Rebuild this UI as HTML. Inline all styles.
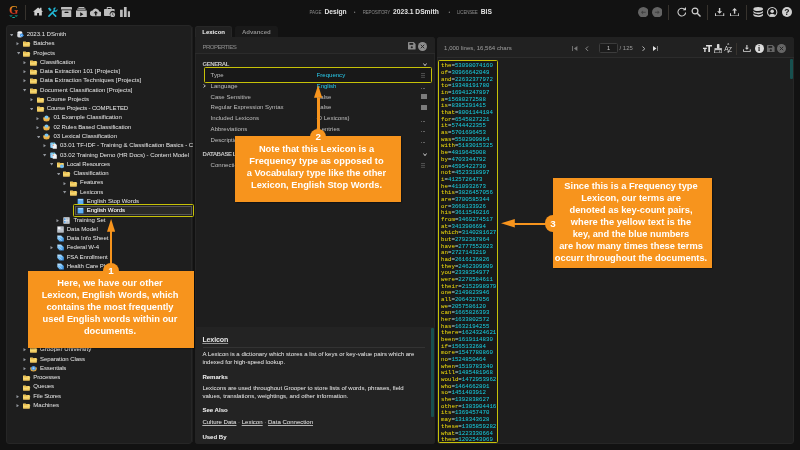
<!DOCTYPE html>
<html><head><meta charset="utf-8"><title>Grooper</title>
<style>
*{margin:0;padding:0;box-sizing:border-box}
html,body{width:800px;height:450px;overflow:hidden;background:#121212}
body{position:relative;font-family:"Liberation Sans", sans-serif;font-size:6.05px;color:#c4c4c4;line-height:9px}
.abs,.tt,.ti,.ar,.pl,.pv,.pi,.pdots,.psq,.t{position:absolute;white-space:nowrap}
.panel{position:absolute;background:#1e1e1e;border-radius:3px;border:1px solid #262626}
.ic{display:block;width:7px;height:7px}
.ti{width:7px;height:7px}
.ar{width:3.3px;height:2.7px;fill:#92969c}
.arr{width:3.5px;height:3.3px;fill:#92969c}
.tt{color:#d0d0d0;text-shadow:0 0 .6px rgba(208,208,208,.42)}
.tt.sel{color:#fff}
.pl{color:#b2b2b2;text-shadow:0 0 .6px rgba(178,178,178,.22)}
.pv{color:#b2b2b2;text-shadow:0 0 .6px rgba(178,178,178,.22)}
.pv.cy{color:#27b0cc;text-shadow:0 0 .6px rgba(39,176,204,.5)}
.pdots{width:3.6px;height:1px;background:linear-gradient(90deg,#626262 0 1.2px,transparent 1.2px 2.4px,#626262 2.4px 3.6px,transparent 3.6px)}
.psq{width:5.4px;height:5.4px;background:#7c7c7c;border-radius:.3px}
.hb{position:absolute;border:1.5px solid #c6c108;border-radius:1.4px}
.co{position:absolute;background:#f7941d;color:#fff;font-weight:bold;font-size:9.3px;line-height:12px;text-align:center;white-space:nowrap;box-shadow:1.4px 1.4px 1.6px rgba(0,0,0,.75)}
.circ{position:absolute;width:16.4px;height:16.4px;border-radius:50%;background:#f7941d;color:#fff;font-weight:bold;font-size:9.8px;line-height:16.2px;text-align:center}
.lex{position:absolute;left:441.1px;top:62px;font-family:"Liberation Mono",monospace;font-size:5.75px;line-height:7px;color:#18b8c8;white-space:nowrap}
.lex div{position:absolute;left:0}
.lex{text-shadow:0 0 .6px rgba(24,184,200,.45)}
.lex b{font-weight:normal;color:#d9c80e;text-shadow:0 0 .6px rgba(217,200,14,.45)}
.lex i{font-style:normal;color:#b8b8b8}
.sm{font-size:4.5px;color:#8a8a8a}
.bd{font-weight:bold;color:#e4e4e4;font-size:6.7px}
.hd{font-weight:bold;color:#e2e2e2;text-shadow:0 0 .5px rgba(220,220,220,.4)}
.hp{color:#d0d0d0;text-shadow:0 0 .6px rgba(208,208,208,.5)}
u{text-decoration-thickness:.45px;text-underline-offset:.9px;text-decoration-color:rgba(220,220,220,.6)}
#wrap{position:absolute;left:0;top:0;width:800px;height:450px;will-change:transform}
</style></head><body><div id="wrap">

<!-- ===== top bar ===== -->
<div class="abs" id="logo" style="left:8.5px;top:2.5px;font-family:'Liberation Serif',serif;font-size:13.4px;line-height:14px;font-weight:bold;transform:scaleX(.9);transform-origin:0 0;background:linear-gradient(180deg,#f0a01c 22%,#e0521f 55%,#c4201e 82%);-webkit-background-clip:text;background-clip:text;color:transparent">G</div>
<svg class="abs" style="left:8.8px;top:14.6px;width:9.2px;height:3.6px" viewBox="0 0 92 36"><path d="M2 4h36l-14 12h-10zM54 4h36l-12 12h-10zM30 20h32l-10 14h-12z" fill="#12b3a2"/></svg>
<div class="abs" style="left:24.8px;top:5px;width:.8px;height:14.6px;background:#37332e"></div>

<!-- left icons -->
<svg class="abs" style="left:32.8px;top:7.2px;width:10.2px;height:9px" viewBox="0 0 21 18"><path d="M10.5 .5L0 9.600h2.800V17.500h5.700v-5.500h4v5.500h5.700V9.600H21L17.500 6.500V1.500h-3v2.400z" fill="#cfcfcf"/></svg>
<svg class="abs" style="left:47.2px;top:6.8px;width:10.6px;height:10.6px" viewBox="0 0 22 22"><g fill="none" stroke="#22b8d6" stroke-width="3.2" stroke-linecap="round"><path d="M4 19L14.500 8.500"/><path d="M18 19l-6.500-6.500"/></g><path d="M13 3.500a4.600 4.600 0 0 1 6-1.800l-3 3 .6 2 2 .6 3-3a4.600 4.600 0 0 1-6.800 5.200z" fill="#22b8d6"/><path d="M2 3l3-2 4.500 4.500-1 2.500-2.500 1z" fill="#22b8d6"/></svg>
<svg class="abs" style="left:61.2px;top:6.8px;width:11px;height:10.3px" viewBox="0 0 22 20" preserveAspectRatio="none"><rect x="0" y="0" width="22" height="5" rx="1" fill="#bdbdbd"/><path d="M1.500 6.500h19V19a1 1 0 0 1-1 1h-17a1 1 0 0 1-1-1z" fill="#bdbdbd"/><rect x="7" y="9" width="8" height="2.600" rx="1" fill="#121212"/></svg>
<svg class="abs" style="left:75.8px;top:6.6px;width:10.8px;height:10.8px" viewBox="0 0 22 20" preserveAspectRatio="none"><path d="M5 0h12v2h-12zM2.500 3h17v2h-17z" fill="#bdbdbd"/><path d="M0 6.500h22V19a1 1 0 0 1-1 1h-20a1 1 0 0 1-1-1z" fill="#bdbdbd"/><path d="M8.500 9.500v7.500l6.500-3.750z" fill="#121212"/></svg>
<svg class="abs" style="left:89.9px;top:7.8px;width:11.6px;height:9px" viewBox="0 0 24 18"><path d="M19.400 7a7.500 7.500 0 0 0-14-2A6 6 0 0 0 6 17h13a5 5 0 0 0 .4-10z" fill="#bdbdbd"/><path d="M12 6l-4.500 4.500h3V15h3v-4.500h3z" fill="#121212"/></svg>
<svg class="abs" style="left:104.4px;top:6.8px;width:11.4px;height:10.4px" viewBox="0 0 23 21"><path d="M7 0h7a1.500 1.500 0 0 1 1.500 1.500V4H20a1.500 1.500 0 0 1 1.500 1.500V9a6.500 6.500 0 0 0-9 9H1.500A1.500 1.500 0 0 1 0 16.500v-11A1.500 1.500 0 0 1 1.500 4H5.500V1.500A1.500 1.500 0 0 1 7 0zM7.500 2v2h6V2z" fill="#bdbdbd" fill-rule="evenodd"/><circle cx="17.500" cy="15.500" r="5" fill="#bdbdbd"/><path d="M17.500 12.500v3.200l2 1.200" stroke="#121212" stroke-width="1.300" fill="none"/></svg>
<svg class="abs" style="left:119.6px;top:7px;width:10.6px;height:10px" viewBox="0 0 21 20"><rect x="0" y="5.500" width="5.400" height="14.500" fill="#bdbdbd"/><rect x="7.800" y="0" width="5.400" height="20" fill="#bdbdbd"/><rect x="15.600" y="8.500" width="5.400" height="11.500" fill="#bdbdbd"/></svg>

<!-- center labels -->
<span class="t sm" style="left:309.4px;top:7.8px">PAGE</span>
<span class="t bd" style="left:324.4px;top:7.3px">Design</span>
<span class="t" style="left:353.7px;top:7.9px;color:#777;font-size:5px">•</span>
<span class="t sm" style="left:362.8px;top:7.8px;letter-spacing:-.22px">REPOSITORY</span>
<span class="t bd" style="left:393px;top:7.3px">2023.1 DSmith</span>
<span class="t" style="left:448.6px;top:7.9px;color:#777;font-size:5px">•</span>
<span class="t sm" style="left:457px;top:7.8px;letter-spacing:-.2px">LICENSEE</span>
<span class="t bd" style="left:480.7px;top:7.3px">BIS</span>

<!-- right icons -->
<svg class="abs" style="left:637.6px;top:6.7px;width:10.6px;height:10.6px" viewBox="0 0 20 20"><circle cx="10" cy="10" r="10" fill="#646464"/><path d="M14.500 9.200H9.500V6.500l-4 3.500 4 3.500v-2.700h5z" fill="#404040"/></svg>
<svg class="abs" style="left:651.8px;top:6.7px;width:10.6px;height:10.6px" viewBox="0 0 20 20"><circle cx="10" cy="10" r="10" fill="#646464"/><path d="M5.500 9.200h5V6.500l4 3.500-4 3.500v-2.700h-5z" fill="#404040"/></svg>
<div class="abs" style="left:668.4px;top:5px;width:.8px;height:14.6px;background:#37332e"></div>
<svg class="abs" style="left:676.6px;top:7.2px;width:9.6px;height:9.6px" viewBox="0 0 20 20"><path d="M16.500 6A8 8 0 1 0 18 11.500" fill="none" stroke="#d0d0d0" stroke-width="2.200"/><path d="M12 7h7V0z" fill="#d0d0d0"/></svg>
<svg class="abs" style="left:690.8px;top:7px;width:10px;height:10px" viewBox="0 0 20 20"><circle cx="8" cy="8" r="5.800" fill="none" stroke="#d0d0d0" stroke-width="2.400"/><path d="M12.500 12.500L19 19" stroke="#d0d0d0" stroke-width="2.800"/></svg>
<div class="abs" style="left:707.1px;top:5px;width:.8px;height:14.6px;background:#37332e"></div>
<svg class="abs" style="left:715.4px;top:7.6px;width:9.2px;height:8.8px" viewBox="0 0 20 19"><path d="M8.500 0h3v7h4L10 12.500 4.500 7h4z" fill="#d0d0d0"/><path d="M1 11.500v6h18v-6" fill="none" stroke="#d0d0d0" stroke-width="2.200"/></svg>
<svg class="abs" style="left:729.9px;top:7.6px;width:9.2px;height:8.8px" viewBox="0 0 20 19"><path d="M8.500 12.500h3v-7h4L10 0 4.500 5.500h4z" fill="#d0d0d0"/><path d="M1 11.500v6h18v-6" fill="none" stroke="#d0d0d0" stroke-width="2.200"/></svg>
<div class="abs" style="left:745.8px;top:5px;width:.8px;height:14.6px;background:#37332e"></div>
<svg class="abs" style="left:752.8px;top:7px;width:10.4px;height:10.2px" viewBox="0 0 20 20"><ellipse cx="10" cy="4" rx="9.500" ry="4" fill="#d0d0d0"/><path d="M.5 7c0 2.200 4.300 4 9.500 4s9.500-1.800 9.500-4v3c0 2.200-4.300 4-9.500 4S.5 12.200.5 10zM.5 12.500c0 2.200 4.300 4 9.500 4s9.500-1.800 9.500-4v3c0 2.200-4.300 4-9.500 4S.5 17.700.5 15.500z" fill="#d0d0d0"/></svg>
<svg class="abs" style="left:767.3px;top:6.8px;width:10.4px;height:10.4px" viewBox="0 0 20 20"><circle cx="10" cy="10" r="9" fill="none" stroke="#d0d0d0" stroke-width="2"/><circle cx="10" cy="8" r="3.400" fill="#d0d0d0"/><path d="M3.800 16a7 5.500 0 0 1 12.400 0A9 9 0 0 1 3.800 16z" fill="#d0d0d0"/></svg>
<div class="abs" style="left:781.8px;top:6.8px;width:10.4px;height:10.4px;border-radius:50%;background:#d0d0d0;color:#121212;font-weight:bold;font-size:8.6px;line-height:10.6px;text-align:center">?</div>

<!-- ===== left panel ===== -->
<div class="panel" style="left:6px;top:25px;width:186px;height:419px"></div>
<div class="abs" style="left:192px;top:27px;width:1px;height:415px;background:#1d1d1d"></div>
<div class="abs" style="left:74.8px;top:205.9px;width:117px;height:9.2px;background:#292929;border:.5px solid #565656"></div>
<svg class="ar" style="left:9.90px;top:33.50px" viewBox="0 0 4 3"><path d="M0 0h4l-2 3z"/></svg>
<span class="ti" style="left:16.70px;top:31.10px"><svg class="ic" viewBox="0 0 14 14"><path d="M.8 2.800v8c0 1.300 2.200 2.300 4.900 2.300s4.900-1 4.900-2.300v-8z" fill="#c9ced6"/><ellipse cx="5.700" cy="2.800" rx="4.900" ry="2.100" fill="#f2f4f6"/><path d="M.8 5.800c0 1.200 2.200 2.100 4.900 2.100s4.900-.9 4.900-2.100M.8 8.600c0 1.200 2.200 2.100 4.900 2.100s4.900-.9 4.900-2.100" stroke="#eef0f3" stroke-width="1" fill="none"/><circle cx="9.400" cy="8.600" r="3.400" fill="#3d97ee"/><path d="M11 7.400l3 1.200-3 1.400z" fill="#3d97ee"/><circle cx="9.400" cy="8.600" r="1.200" fill="#bfe0ff"/></svg></span>
<span class="tt" style="left:26.70px;top:30px;letter-spacing:-0.036px">2023.1 DSmith</span>
<svg class="ar arr" style="left:16.47px;top:42.38px" viewBox="0 0 3 4"><path d="M0 0v4l3-2z"/></svg>
<span class="ti" style="left:23.37px;top:40.38px"><svg class="ic" viewBox="0 0 14 14" style="overflow:visible"><path d="M0 3.600a.8.800 0 0 1 .8-.8h4.400l1.300 1.300h6.300a.8.800 0 0 1 .8.800v1.500l1.200 1.300-1.200 1.300v3.200a.8.800 0 0 1-.8.800H.8a.8.800 0 0 1-.8-.8z" fill="#f6d870"/><rect x="1.400" y="5" width="7.800" height="1.500" fill="#dc9c2c"/><path d="M0 11.200h13.600v1a.8.800 0 0 1-.8.800H.8a.8.800 0 0 1-.8-.8z" fill="#ecbe54"/></svg></span>
<span class="tt" style="left:33.37px;top:39px;letter-spacing:-0.104px">Batches</span>
<svg class="ar" style="left:16.57px;top:52.05px" viewBox="0 0 4 3"><path d="M0 0h4l-2 3z"/></svg>
<span class="ti" style="left:23.37px;top:49.65px"><svg class="ic" viewBox="0 0 14 14" style="overflow:visible"><path d="M0 3.600a.8.800 0 0 1 .8-.8h4.400l1.300 1.300h6.300a.8.800 0 0 1 .8.800v1.500l1.200 1.300-1.200 1.300v3.200a.8.800 0 0 1-.8.800H.8a.8.800 0 0 1-.8-.8z" fill="#f6d870"/><rect x="1.400" y="5" width="7.800" height="1.500" fill="#dc9c2c"/><path d="M0 11.200h13.600v1a.8.800 0 0 1-.8.800H.8a.8.800 0 0 1-.8-.8z" fill="#ecbe54"/></svg></span>
<span class="tt" style="left:33.37px;top:49px;letter-spacing:-0.028px">Projects</span>
<svg class="ar arr" style="left:23.14px;top:60.93px" viewBox="0 0 3 4"><path d="M0 0v4l3-2z"/></svg>
<span class="ti" style="left:30.04px;top:58.93px"><svg class="ic" viewBox="0 0 14 14" style="overflow:visible"><path d="M0 3.600a.8.800 0 0 1 .8-.8h4.400l1.300 1.300h6.300a.8.800 0 0 1 .8.800v1.500l1.200 1.300-1.200 1.300v3.200a.8.800 0 0 1-.8.800H.8a.8.800 0 0 1-.8-.8z" fill="#f6d870"/><rect x="1.400" y="5" width="7.800" height="1.500" fill="#dc9c2c"/><path d="M0 11.200h13.600v1a.8.800 0 0 1-.8.800H.8a.8.800 0 0 1-.8-.8z" fill="#ecbe54"/></svg></span>
<span class="tt" style="left:40.04px;top:58px;letter-spacing:-0.032px">Classification</span>
<svg class="ar arr" style="left:23.14px;top:70.20px" viewBox="0 0 3 4"><path d="M0 0v4l3-2z"/></svg>
<span class="ti" style="left:30.04px;top:68.20px"><svg class="ic" viewBox="0 0 14 14" style="overflow:visible"><path d="M0 3.600a.8.800 0 0 1 .8-.8h4.400l1.300 1.300h6.300a.8.800 0 0 1 .8.800v1.500l1.200 1.300-1.200 1.300v3.200a.8.800 0 0 1-.8.800H.8a.8.800 0 0 1-.8-.8z" fill="#f6d870"/><rect x="1.400" y="5" width="7.800" height="1.500" fill="#dc9c2c"/><path d="M0 11.200h13.600v1a.8.800 0 0 1-.8.800H.8a.8.800 0 0 1-.8-.8z" fill="#ecbe54"/></svg></span>
<span class="tt" style="left:40.04px;top:67px;letter-spacing:-0.002px">Data Extraction 101 [Projects]</span>
<svg class="ar arr" style="left:23.14px;top:79.47px" viewBox="0 0 3 4"><path d="M0 0v4l3-2z"/></svg>
<span class="ti" style="left:30.04px;top:77.47px"><svg class="ic" viewBox="0 0 14 14" style="overflow:visible"><path d="M0 3.600a.8.800 0 0 1 .8-.8h4.400l1.300 1.300h6.300a.8.800 0 0 1 .8.800v1.500l1.200 1.300-1.200 1.300v3.200a.8.800 0 0 1-.8.800H.8a.8.800 0 0 1-.8-.8z" fill="#f6d870"/><rect x="1.400" y="5" width="7.800" height="1.500" fill="#dc9c2c"/><path d="M0 11.200h13.600v1a.8.800 0 0 1-.8.800H.8a.8.800 0 0 1-.8-.8z" fill="#ecbe54"/></svg></span>
<span class="tt" style="left:40.04px;top:76px;letter-spacing:0.021px">Data Extraction Techniques [Projects]</span>
<svg class="ar" style="left:23.24px;top:89.15px" viewBox="0 0 4 3"><path d="M0 0h4l-2 3z"/></svg>
<span class="ti" style="left:30.04px;top:86.75px"><svg class="ic" viewBox="0 0 14 14" style="overflow:visible"><path d="M0 3.600a.8.800 0 0 1 .8-.8h4.400l1.300 1.300h6.300a.8.800 0 0 1 .8.800v1.500l1.200 1.300-1.200 1.300v3.200a.8.800 0 0 1-.8.800H.8a.8.800 0 0 1-.8-.8z" fill="#f6d870"/><rect x="1.400" y="5" width="7.800" height="1.500" fill="#dc9c2c"/><path d="M0 11.200h13.600v1a.8.800 0 0 1-.8.800H.8a.8.800 0 0 1-.8-.8z" fill="#ecbe54"/></svg></span>
<span class="tt" style="left:40.04px;top:86px;letter-spacing:0.020px">Document Classification [Projects]</span>
<svg class="ar arr" style="left:29.81px;top:98.02px" viewBox="0 0 3 4"><path d="M0 0v4l3-2z"/></svg>
<span class="ti" style="left:36.71px;top:96.02px"><svg class="ic" viewBox="0 0 14 14" style="overflow:visible"><path d="M0 3.600a.8.800 0 0 1 .8-.8h4.400l1.300 1.300h6.300a.8.800 0 0 1 .8.800v1.500l1.200 1.300-1.200 1.300v3.200a.8.800 0 0 1-.8.800H.8a.8.800 0 0 1-.8-.8z" fill="#f6d870"/><rect x="1.400" y="5" width="7.800" height="1.500" fill="#dc9c2c"/><path d="M0 11.200h13.600v1a.8.800 0 0 1-.8.800H.8a.8.800 0 0 1-.8-.8z" fill="#ecbe54"/></svg></span>
<span class="tt" style="left:46.71px;top:95px;letter-spacing:-0.050px">Course Projects</span>
<svg class="ar" style="left:29.91px;top:107.70px" viewBox="0 0 4 3"><path d="M0 0h4l-2 3z"/></svg>
<span class="ti" style="left:36.71px;top:105.30px"><svg class="ic" viewBox="0 0 14 14" style="overflow:visible"><path d="M0 3.600a.8.800 0 0 1 .8-.8h4.400l1.300 1.300h6.300a.8.800 0 0 1 .8.800v1.500l1.200 1.300-1.200 1.300v3.200a.8.800 0 0 1-.8.800H.8a.8.800 0 0 1-.8-.8z" fill="#f6d870"/><rect x="1.400" y="5" width="7.800" height="1.500" fill="#dc9c2c"/><path d="M0 11.200h13.600v1a.8.800 0 0 1-.8.800H.8a.8.800 0 0 1-.8-.8z" fill="#ecbe54"/></svg></span>
<span class="tt" style="left:46.71px;top:104px;letter-spacing:-0.177px">Course Projects - COMPLETED</span>
<svg class="ar arr" style="left:36.48px;top:116.58px" viewBox="0 0 3 4"><path d="M0 0v4l3-2z"/></svg>
<span class="ti" style="left:43.38px;top:114.58px"><svg class="ic" viewBox="0 0 14 14"><path d="M.6 4.600h12.800v3.600a6.400 5 0 0 1-12.800 0z" fill="#e5a535"/><path d="M1 7.200h12M1.800 9.700h10.400" stroke="#f7d688" stroke-width="1" fill="none"/><ellipse cx="7" cy="4.200" rx="4" ry="3.300" fill="#7cc7f3"/></svg></span>
<span class="tt" style="left:53.38px;top:113px;letter-spacing:-0.036px">01 Example Classification</span>
<svg class="ar arr" style="left:36.48px;top:125.85px" viewBox="0 0 3 4"><path d="M0 0v4l3-2z"/></svg>
<span class="ti" style="left:43.38px;top:123.85px"><svg class="ic" viewBox="0 0 14 14"><path d="M.6 4.600h12.800v3.600a6.400 5 0 0 1-12.800 0z" fill="#e5a535"/><path d="M1 7.200h12M1.800 9.700h10.400" stroke="#f7d688" stroke-width="1" fill="none"/><ellipse cx="7" cy="4.200" rx="4" ry="3.300" fill="#7cc7f3"/></svg></span>
<span class="tt" style="left:53.38px;top:123px;letter-spacing:-0.083px">02 Rules Based Classification</span>
<svg class="ar" style="left:36.58px;top:135.53px" viewBox="0 0 4 3"><path d="M0 0h4l-2 3z"/></svg>
<span class="ti" style="left:43.38px;top:133.12px"><svg class="ic" viewBox="0 0 14 14"><path d="M.6 4.600h12.800v3.600a6.400 5 0 0 1-12.800 0z" fill="#e5a535"/><path d="M1 7.200h12M1.800 9.700h10.400" stroke="#f7d688" stroke-width="1" fill="none"/><ellipse cx="7" cy="4.200" rx="4" ry="3.300" fill="#7cc7f3"/></svg></span>
<span class="tt" style="left:53.38px;top:132px;letter-spacing:-0.038px">03 Lexical Classification</span>
<svg class="ar arr" style="left:43.15px;top:144.40px" viewBox="0 0 3 4"><path d="M0 0v4l3-2z"/></svg>
<span class="ti" style="left:50.05px;top:142.40px"><svg class="ic" viewBox="0 0 14 14"><rect x=".6" y=".8" width="10" height="11" rx="1.800" fill="#7fc4f0"/><path d="M5.400 4.200h6l2.200 2v7.200H5.400z" fill="#f3f3f3"/><circle cx="7" cy="3.400" r="1" fill="#4db05a"/><circle cx="6.400" cy="6.400" r="1" fill="#e0523e"/><path d="M2 5.500l2.500 5" stroke="#d9f0ff" stroke-width="1"/></svg></span>
<span class="tt" style="left:60.05px;top:141px;letter-spacing:-0.037px">03.01 TF-IDF - Training &amp; Classification Basics - Content Model</span>
<svg class="ar" style="left:43.25px;top:154.07px" viewBox="0 0 4 3"><path d="M0 0h4l-2 3z"/></svg>
<span class="ti" style="left:50.05px;top:151.67px"><svg class="ic" viewBox="0 0 14 14"><rect x=".6" y=".8" width="10" height="11" rx="1.800" fill="#7fc4f0"/><path d="M5.400 4.200h6l2.200 2v7.200H5.400z" fill="#f3f3f3"/><circle cx="7" cy="3.400" r="1" fill="#4db05a"/><circle cx="6.400" cy="6.400" r="1" fill="#e0523e"/><path d="M2 5.500l2.500 5" stroke="#d9f0ff" stroke-width="1"/></svg></span>
<span class="tt" style="left:60.05px;top:151px;letter-spacing:-0.041px">03.02 Training Demo (HR Docs) - Content Model</span>
<svg class="ar" style="left:49.92px;top:163.35px" viewBox="0 0 4 3"><path d="M0 0h4l-2 3z"/></svg>
<span class="ti" style="left:56.72px;top:160.95px"><svg class="ic" viewBox="0 0 14 14" style="overflow:visible"><path d="M0 3.600a.8.800 0 0 1 .8-.8h4.400l1.300 1.300h6.300a.8.800 0 0 1 .8.800v7.300a.8.800 0 0 1-.8.800H.8a.8.800 0 0 1-.8-.8z" fill="#f6d870"/><rect x="1.400" y="5" width="7.800" height="1.500" fill="#dc9c2c"/><circle cx="9.800" cy="10.600" r="3.700" fill="#5fb2f0"/><path d="M6.200 10.600h7.200" stroke="#a9d8fa" stroke-width=".9"/></svg></span>
<span class="tt" style="left:66.72px;top:160px;letter-spacing:-0.119px">Local Resources</span>
<svg class="ar" style="left:56.59px;top:172.62px" viewBox="0 0 4 3"><path d="M0 0h4l-2 3z"/></svg>
<span class="ti" style="left:63.39px;top:170.22px"><svg class="ic" viewBox="0 0 14 14" style="overflow:visible"><path d="M0 3.600a.8.800 0 0 1 .8-.8h4.400l1.300 1.300h6.300a.8.800 0 0 1 .8.800v1.500l1.200 1.300-1.200 1.300v3.200a.8.800 0 0 1-.8.800H.8a.8.800 0 0 1-.8-.8z" fill="#f6d870"/><rect x="1.400" y="5" width="7.800" height="1.500" fill="#dc9c2c"/><path d="M0 11.200h13.600v1a.8.800 0 0 1-.8.800H.8a.8.800 0 0 1-.8-.8z" fill="#ecbe54"/></svg></span>
<span class="tt" style="left:73.39px;top:169px;letter-spacing:-0.032px">Classification</span>
<svg class="ar arr" style="left:63.16px;top:181.50px" viewBox="0 0 3 4"><path d="M0 0v4l3-2z"/></svg>
<span class="ti" style="left:70.06px;top:179.50px"><svg class="ic" viewBox="0 0 14 14" style="overflow:visible"><path d="M0 3.600a.8.800 0 0 1 .8-.8h4.400l1.300 1.300h6.300a.8.800 0 0 1 .8.800v1.500l1.200 1.300-1.200 1.300v3.200a.8.800 0 0 1-.8.800H.8a.8.800 0 0 1-.8-.8z" fill="#f6d870"/><rect x="1.400" y="5" width="7.800" height="1.500" fill="#dc9c2c"/><path d="M0 11.200h13.600v1a.8.800 0 0 1-.8.800H.8a.8.800 0 0 1-.8-.8z" fill="#ecbe54"/></svg></span>
<span class="tt" style="left:80.06px;top:178px;letter-spacing:-0.086px">Features</span>
<svg class="ar" style="left:63.26px;top:191.18px" viewBox="0 0 4 3"><path d="M0 0h4l-2 3z"/></svg>
<span class="ti" style="left:70.06px;top:188.78px"><svg class="ic" viewBox="0 0 14 14" style="overflow:visible"><path d="M0 3.600a.8.800 0 0 1 .8-.8h4.400l1.300 1.300h6.300a.8.800 0 0 1 .8.800v1.500l1.200 1.300-1.200 1.300v3.200a.8.800 0 0 1-.8.800H.8a.8.800 0 0 1-.8-.8z" fill="#f6d870"/><rect x="1.400" y="5" width="7.800" height="1.500" fill="#dc9c2c"/><path d="M0 11.200h13.600v1a.8.800 0 0 1-.8.800H.8a.8.800 0 0 1-.8-.8z" fill="#ecbe54"/></svg></span>
<span class="tt" style="left:80.06px;top:188px;letter-spacing:-0.086px">Lexicons</span>
<span class="ti" style="left:76.73px;top:198.05px"><svg class="ic" viewBox="0 0 14 14"><rect x="1.200" y="1.400" width="11.800" height="11.800" rx=".8" fill="#3f9bf0"/><rect x="2.400" y="2.600" width="9.400" height="2.200" fill="#d4eaff"/><rect x="2.400" y="5.800" width="9.400" height="6.200" fill="#5fb0f6"/></svg></span>
<span class="tt" style="left:86.73px;top:197px;letter-spacing:-0.042px">English Stop Words</span>
<span class="ti" style="left:76.73px;top:207.32px"><svg class="ic" viewBox="0 0 14 14"><rect x="1.200" y="1.400" width="11.800" height="11.800" rx=".8" fill="#3f9bf0"/><rect x="2.400" y="2.600" width="9.400" height="2.200" fill="#d4eaff"/><rect x="2.400" y="5.800" width="9.400" height="6.200" fill="#5fb0f6"/></svg></span>
<span class="tt sel" style="left:86.73px;top:206px;letter-spacing:-0.048px">English Words</span>
<svg class="ar arr" style="left:56.49px;top:218.60px" viewBox="0 0 3 4"><path d="M0 0v4l3-2z"/></svg>
<span class="ti" style="left:63.39px;top:216.60px"><svg class="ic" viewBox="0 0 14 14"><rect x=".8" y=".6" width="12.400" height="12.800" fill="#e9edf1"/><rect x="2.400" y="2.400" width="2.600" height="4" fill="#3a8ee0"/><rect x="2.400" y="8" width="2.600" height="3.600" fill="#3a8ee0"/><path d="M6.400 3h5M6.400 5.400h5M6.400 8.600h5M6.400 11h5" stroke="#7a8794" stroke-width="1"/></svg></span>
<span class="tt" style="left:73.39px;top:216px;letter-spacing:-0.024px">Training Set</span>
<span class="ti" style="left:56.72px;top:225.88px"><svg class="ic" viewBox="0 0 14 14"><rect x=".6" y=".8" width="12.800" height="12.400" fill="#d5dae1"/><rect x="2" y="2.200" width="4.400" height="4" fill="#f4f6f8"/><path d="M7.600 3h4.400M7.600 5.400h4.400M2 8.400h10M2 10.800h10" stroke="#8d97a3" stroke-width="1"/></svg></span>
<span class="tt" style="left:66.72px;top:225px;letter-spacing:0.009px">Data Model</span>
<span class="ti" style="left:56.72px;top:235.15px"><svg class="ic" viewBox="0 0 14 14"><defs><linearGradient id="dg" x1="0" y1="0" x2="1" y2="1"><stop offset="0" stop-color="#b5defb"/><stop offset=".55" stop-color="#62b3f2"/><stop offset="1" stop-color="#2f86dc"/></linearGradient></defs><path d="M.6 1h7.600l5.400 4.800v7.400H5.400L.6 8.200z" fill="url(#dg)"/><path d="M2.200 3.200h4.600l3 2.800M4.400 6.400l5.400 5" stroke="#e4f3ff" stroke-width=".9" fill="none"/></svg></span>
<span class="tt" style="left:66.72px;top:234px;letter-spacing:-0.018px">Data Info Sheet</span>
<svg class="ar arr" style="left:49.82px;top:246.43px" viewBox="0 0 3 4"><path d="M0 0v4l3-2z"/></svg>
<span class="ti" style="left:56.72px;top:244.43px"><svg class="ic" viewBox="0 0 14 14"><defs><linearGradient id="dg" x1="0" y1="0" x2="1" y2="1"><stop offset="0" stop-color="#b5defb"/><stop offset=".55" stop-color="#62b3f2"/><stop offset="1" stop-color="#2f86dc"/></linearGradient></defs><path d="M.6 1h7.600l5.400 4.800v7.400H5.400L.6 8.200z" fill="url(#dg)"/><path d="M2.200 3.200h4.600l3 2.800M4.400 6.400l5.400 5" stroke="#e4f3ff" stroke-width=".9" fill="none"/></svg></span>
<span class="tt" style="left:66.72px;top:243px;letter-spacing:-0.081px">Federal W-4</span>
<span class="ti" style="left:56.72px;top:253.70px"><svg class="ic" viewBox="0 0 14 14"><defs><linearGradient id="dg" x1="0" y1="0" x2="1" y2="1"><stop offset="0" stop-color="#b5defb"/><stop offset=".55" stop-color="#62b3f2"/><stop offset="1" stop-color="#2f86dc"/></linearGradient></defs><path d="M.6 1h7.600l5.400 4.800v7.400H5.400L.6 8.200z" fill="url(#dg)"/><path d="M2.200 3.200h4.600l3 2.800M4.400 6.400l5.400 5" stroke="#e4f3ff" stroke-width=".9" fill="none"/></svg></span>
<span class="tt" style="left:66.72px;top:253px;letter-spacing:-0.072px">FSA Enrollment</span>
<span class="ti" style="left:56.72px;top:262.98px"><svg class="ic" viewBox="0 0 14 14"><defs><linearGradient id="dg" x1="0" y1="0" x2="1" y2="1"><stop offset="0" stop-color="#b5defb"/><stop offset=".55" stop-color="#62b3f2"/><stop offset="1" stop-color="#2f86dc"/></linearGradient></defs><path d="M.6 1h7.600l5.400 4.800v7.400H5.400L.6 8.200z" fill="url(#dg)"/><path d="M2.200 3.200h4.600l3 2.800M4.400 6.400l5.400 5" stroke="#e4f3ff" stroke-width=".9" fill="none"/></svg></span>
<span class="tt" style="left:66.72px;top:262px;letter-spacing:-0.071px">Health Care Plan</span>
<svg class="ar arr" style="left:23.14px;top:348.45px" viewBox="0 0 3 4"><path d="M0 0v4l3-2z"/></svg>
<span class="ti" style="left:30.04px;top:346.45px"><svg class="ic" viewBox="0 0 14 14" style="overflow:visible"><path d="M0 3.600a.8.800 0 0 1 .8-.8h4.400l1.300 1.300h6.300a.8.800 0 0 1 .8.800v1.500l1.200 1.300-1.200 1.300v3.200a.8.800 0 0 1-.8.800H.8a.8.800 0 0 1-.8-.8z" fill="#f6d870"/><rect x="1.400" y="5" width="7.800" height="1.500" fill="#dc9c2c"/><path d="M0 11.200h13.600v1a.8.800 0 0 1-.8.800H.8a.8.800 0 0 1-.8-.8z" fill="#ecbe54"/></svg></span>
<span class="tt" style="left:40.04px;top:345px;letter-spacing:0.043px">Grooper University</span>
<svg class="ar arr" style="left:23.14px;top:357.73px" viewBox="0 0 3 4"><path d="M0 0v4l3-2z"/></svg>
<span class="ti" style="left:30.04px;top:355.73px"><svg class="ic" viewBox="0 0 14 14" style="overflow:visible"><path d="M0 3.600a.8.800 0 0 1 .8-.8h4.400l1.300 1.300h6.300a.8.800 0 0 1 .8.800v1.500l1.200 1.300-1.200 1.300v3.200a.8.800 0 0 1-.8.800H.8a.8.800 0 0 1-.8-.8z" fill="#f6d870"/><rect x="1.400" y="5" width="7.800" height="1.500" fill="#dc9c2c"/><path d="M0 11.200h13.600v1a.8.800 0 0 1-.8.800H.8a.8.800 0 0 1-.8-.8z" fill="#ecbe54"/></svg></span>
<span class="tt" style="left:40.04px;top:355px;letter-spacing:-0.070px">Separation Class</span>
<svg class="ar arr" style="left:23.14px;top:367.00px" viewBox="0 0 3 4"><path d="M0 0v4l3-2z"/></svg>
<span class="ti" style="left:30.04px;top:365.00px"><svg class="ic" viewBox="0 0 14 14"><path d="M.6 4.600h12.800v3.600a6.400 5 0 0 1-12.800 0z" fill="#e5a535"/><path d="M1 7.200h12" stroke="#f7d688" stroke-width="1" fill="none"/><circle cx="7" cy="6.500" r="4.600" fill="#4a97e4"/><circle cx="7" cy="6.500" r="2" fill="#9fd0f8"/></svg></span>
<span class="tt" style="left:40.04px;top:364px;letter-spacing:-0.136px">Essentials</span>
<span class="ti" style="left:23.37px;top:374.28px"><svg class="ic" viewBox="0 0 14 14" style="overflow:visible"><path d="M0 3.600a.8.800 0 0 1 .8-.8h4.400l1.300 1.300h6.300a.8.800 0 0 1 .8.800v1.500l1.200 1.300-1.200 1.300v3.200a.8.800 0 0 1-.8.800H.8a.8.800 0 0 1-.8-.8z" fill="#f6d870"/><rect x="1.400" y="5" width="7.800" height="1.500" fill="#dc9c2c"/><path d="M0 11.200h13.600v1a.8.800 0 0 1-.8.800H.8a.8.800 0 0 1-.8-.8z" fill="#ecbe54"/></svg></span>
<span class="tt" style="left:33.37px;top:373px;letter-spacing:-0.179px">Processes</span>
<span class="ti" style="left:23.37px;top:383.55px"><svg class="ic" viewBox="0 0 14 14" style="overflow:visible"><path d="M0 3.600a.8.800 0 0 1 .8-.8h4.400l1.300 1.300h6.300a.8.800 0 0 1 .8.800v1.500l1.200 1.300-1.200 1.300v3.200a.8.800 0 0 1-.8.800H.8a.8.800 0 0 1-.8-.8z" fill="#f6d870"/><rect x="1.400" y="5" width="7.800" height="1.500" fill="#dc9c2c"/><path d="M0 11.200h13.600v1a.8.800 0 0 1-.8.800H.8a.8.800 0 0 1-.8-.8z" fill="#ecbe54"/></svg></span>
<span class="tt" style="left:33.37px;top:382px;letter-spacing:-0.093px">Queues</span>
<svg class="ar arr" style="left:16.47px;top:394.83px" viewBox="0 0 3 4"><path d="M0 0v4l3-2z"/></svg>
<span class="ti" style="left:23.37px;top:392.83px"><svg class="ic" viewBox="0 0 14 14" style="overflow:visible"><path d="M0 3.600a.8.800 0 0 1 .8-.8h4.400l1.300 1.300h6.300a.8.800 0 0 1 .8.800v1.500l1.200 1.300-1.200 1.300v3.200a.8.800 0 0 1-.8.800H.8a.8.800 0 0 1-.8-.8z" fill="#f6d870"/><rect x="1.400" y="5" width="7.800" height="1.500" fill="#dc9c2c"/><path d="M0 11.200h13.600v1a.8.800 0 0 1-.8.800H.8a.8.800 0 0 1-.8-.8z" fill="#ecbe54"/></svg></span>
<span class="tt" style="left:33.37px;top:392px;letter-spacing:-0.117px">File Stores</span>
<svg class="ar arr" style="left:16.47px;top:404.10px" viewBox="0 0 3 4"><path d="M0 0v4l3-2z"/></svg>
<span class="ti" style="left:23.37px;top:402.10px"><svg class="ic" viewBox="0 0 14 14" style="overflow:visible"><path d="M0 3.600a.8.800 0 0 1 .8-.8h4.400l1.300 1.300h6.300a.8.800 0 0 1 .8.800v1.500l1.200 1.300-1.200 1.300v3.200a.8.800 0 0 1-.8.800H.8a.8.800 0 0 1-.8-.8z" fill="#f6d870"/><rect x="1.400" y="5" width="7.800" height="1.500" fill="#dc9c2c"/><path d="M0 11.200h13.600v1a.8.800 0 0 1-.8.800H.8a.8.800 0 0 1-.8-.8z" fill="#ecbe54"/></svg></span>
<span class="tt" style="left:33.37px;top:401px;letter-spacing:-0.033px">Machines</span>
<div class="abs" style="left:192.5px;top:140px;width:2.5px;height:20px;background:#121212"></div>
<div class="hb" style="left:72.9px;top:203.6px;width:121.6px;height:13.5px"></div>

<!-- ===== middle panel ===== -->
<div class="abs" style="left:195px;top:25.6px;width:37px;height:14px;background:#212121;border-radius:2.5px 2.5px 0 0;border:1px solid #272727;border-bottom:none"></div>
<div class="abs" style="left:235px;top:25.6px;width:43px;height:11.4px;background:#191919;border-radius:2.5px 2.5px 0 0"></div>
<span class="t" style="left:202.2px;top:28.2px;font-weight:bold;color:#f0f0f0">Lexicon</span>
<span class="t" style="left:241.9px;top:28.2px;font-weight:bold;color:#8d8d8d">Advanced</span>
<div class="panel" style="left:195px;top:37px;width:239.5px;height:406.8px;border-radius:0 3px 3px 3px"></div>
<div class="abs" style="left:195px;top:37px;width:239.5px;height:17px;background:#212121;border-radius:0 3px 0 0;border-bottom:.7px solid #2b2b2b"></div>
<span class="t" style="left:202.5px;top:41.8px;color:#8f8f8f;font-size:6.1px;letter-spacing:-.55px">PROPERTIES</span>
<svg class="abs" style="left:408.3px;top:42.4px;width:7.6px;height:7.6px" viewBox="0 0 16 16"><path d="M1.500 0h10.500l4 4v10.500a1.500 1.500 0 0 1-1.500 1.500h-13a1.500 1.500 0 0 1-1.500-1.500v-13a1.500 1.500 0 0 1 1.500-1.500z" fill="#8c8c8c"/><rect x="3" y="2" width="8" height="4" fill="#212121"/><circle cx="8" cy="11" r="2.300" fill="#212121"/></svg>
<svg class="abs" style="left:418.1px;top:41.8px;width:9px;height:9px" viewBox="0 0 18 18"><circle cx="9" cy="9" r="9" fill="#8c8c8c"/><path d="M5.500 5.500l7 7M12.500 5.500l-7 7" stroke="#212121" stroke-width="1.800"/></svg>

<span class="t hd" style="left:202.5px;top:59.5px;color:#c4c4c4;text-shadow:none;letter-spacing:-.45px">GENERAL</span>
<svg class="abs" style="left:422.8px;top:62.6px;width:4px;height:3.4px" viewBox="0 0 8 7"><path d="M.8 1l3.200 4.500L7.200 1" fill="none" stroke="#cfcfcf" stroke-width="2"/></svg>
<div class="abs" style="left:204.6px;top:68px;width:227px;height:13.6px;background:#181818"></div>
<svg class="abs" style="left:203.2px;top:84.4px;width:3px;height:3.8px" viewBox="0 0 6 8"><path d="M.8 .8l4 3.200-4 3.200" fill="none" stroke="#cfcfcf" stroke-width="1.900"/></svg>
<span class="pl" style="left:210.6px;top:70.80px">Type</span>
<span class="pv cy" style="left:316.6px;top:70.80px">Frequency</span>
<svg class="pi" style="left:420.6px;top:72.90px;width:4.4px;height:4.8px" viewBox="0 0 9 10"><path d="M0 1h9M0 5h9M0 9h9" stroke="#707070" stroke-width="1.3" fill="none"/></svg>
<span class="pl" style="left:210.6px;top:81.70px">Language</span>
<span class="pv cy" style="left:316.6px;top:81.70px">English</span>
<div class="pdots" style="left:421.4px;top:88.20px"></div>
<span class="pl" style="left:210.6px;top:92.50px">Case Sensitive</span>
<span class="pv " style="left:316.6px;top:92.50px">False</span>
<div class="psq" style="left:421.2px;top:94.10px"></div>
<span class="pl" style="left:210.6px;top:103.20px">Regular Expression Syntax</span>
<span class="pv " style="left:316.6px;top:103.20px">False</span>
<div class="psq" style="left:421.2px;top:104.80px"></div>
<span class="pl" style="left:210.6px;top:114.10px">Included Lexicons</span>
<span class="pv " style="left:316.6px;top:114.10px">(0 Lexicons)</span>
<div class="pdots" style="left:421.4px;top:120.60px"></div>
<span class="pl" style="left:210.6px;top:124.90px">Abbreviations</span>
<span class="pv " style="left:316.6px;top:124.90px">0 entries</span>
<div class="pdots" style="left:421.4px;top:131.40px"></div>
<span class="pl" style="left:210.6px;top:135.70px">Description</span>
<div class="pdots" style="left:421.4px;top:142.20px"></div>
<span class="pl" style="left:210.6px;top:161.00px">Connection</span>
<svg class="pi" style="left:420.6px;top:163.10px;width:4.4px;height:4.8px" viewBox="0 0 9 10"><path d="M0 1h9M0 5h9M0 9h9" stroke="#707070" stroke-width="1.3" fill="none"/></svg>
<span class="t hd" style="left:202.5px;top:150px;color:#c4c4c4;text-shadow:none;letter-spacing:-.45px">DATABASE LEXICON</span>
<svg class="abs" style="left:422.8px;top:152.8px;width:4px;height:3.4px" viewBox="0 0 8 7"><path d="M.8 1l3.200 4.500L7.200 1" fill="none" stroke="#cfcfcf" stroke-width="2"/></svg>
<div class="hb" style="left:203.7px;top:66.9px;width:228.6px;height:15.8px"></div>

<!-- help -->
<div class="abs" style="left:195px;top:326.5px;width:239.5px;height:117.3px;background:#232323;border-radius:0 0 3px 3px"></div>
<div class="abs" style="left:430.8px;top:328px;width:3.2px;height:89px;background:#17504f;border-radius:1px"></div>
<span class="t" style="left:202.4px;top:335.6px;font-weight:bold;font-size:7.1px;color:#e6e6e6;letter-spacing:-.15px"><u>Lexicon</u></span>
<div class="abs" style="left:202.5px;top:347.2px;width:222px;height:.6px;background:#333"></div>
<span class="t hp" style="left:202.4px;top:349.8px">A Lexicon is a dictionary which stores a list of keys or key-value pairs which are</span>
<span class="t hp" style="left:202.4px;top:357.8px">indexed for high-speed lookup.</span>
<span class="t hd" style="left:202.4px;top:372.5px">Remarks</span>
<span class="t hp" style="left:202.4px;top:384.2px">Lexicons are used throughout Grooper to store lists of words, phrases, field</span>
<span class="t hp" style="left:202.4px;top:391.9px">values, translations, weightings, and other information.</span>
<span class="t hd" style="left:202.4px;top:406.2px">See Also</span>
<span class="t hp" style="left:202.4px;top:417.5px"><u>Culture Data</u> <span style="color:#888">·</span> <u>Lexicon</u> <span style="color:#888">·</span> <u>Data Connection</u></span>
<span class="t hd" style="left:202.4px;top:432.8px">Used By</span>
<div class="abs" style="left:195px;top:443.8px;width:240px;height:7px;background:#121212"></div>

<!-- ===== right panel ===== -->
<div class="panel" style="left:437px;top:37px;width:356.8px;height:406.8px"></div>
<div class="abs" style="left:437px;top:37px;width:356.8px;height:21.2px;background:#212121;border-radius:3px 3px 0 0;border-bottom:.7px solid #2c2c2c"></div>
<span class="t" style="left:444.1px;top:44px;color:#8a8a8a;text-shadow:0 0 .6px rgba(138,138,138,.5)">1,000 lines, 16,564 chars</span>
<svg class="abs" style="left:572.2px;top:46px;width:5.4px;height:5px" viewBox="0 0 11 10"><rect x="0" y="0" width="1.800" height="10" fill="#787878"/><path d="M11 0v10L4 5z" fill="#787878"/></svg>
<svg class="abs" style="left:585.4px;top:45.8px;width:3.6px;height:5.4px" viewBox="0 0 7 11"><path d="M6 1L1.500 5.500 6 10" fill="none" stroke="#aaa" stroke-width="1.600"/></svg>
<div class="abs" style="left:599.2px;top:43px;width:18.8px;height:9.6px;border:.6px solid #3c3c3c;border-radius:1.5px;background:#1b1b1b;color:#c8c8c8;text-align:center;font-size:5.6px;line-height:8.6px">1</div>
<span class="t" style="left:619.6px;top:43.7px;color:#9c9c9c;font-size:5.9px">/ 125</span>
<svg class="abs" style="left:641.6px;top:45.8px;width:3.6px;height:5.4px" viewBox="0 0 7 11"><path d="M1 1l4.500 4.500L1 10" fill="none" stroke="#ddd" stroke-width="1.700"/></svg>
<svg class="abs" style="left:652.8px;top:46px;width:5.4px;height:5px" viewBox="0 0 11 10"><rect x="9.200" y="0" width="1.800" height="10" fill="#e4e4e4"/><path d="M0 0v10l7-5z" fill="#e4e4e4"/></svg>
<svg class="abs" style="left:703px;top:44.8px;width:9.2px;height:7.4px" viewBox="0 0 46 37"><path d="M0 14h19v6.500h-6V37h-7V20.500H0z" fill="#dedede"/><path d="M15 0h31v7.500H35V37h-8.500V7.500H15z" fill="#dedede"/></svg>
<svg class="abs" style="left:713.8px;top:43.8px;width:8.4px;height:9.4px" viewBox="0 0 17 19"><rect x="6" y="0" width="5" height="9" rx="1.600" fill="#dadada"/><rect x="1" y="8.500" width="15" height="3" fill="#dadada"/><path d="M1.700 11.500h13.600l.9 6.700H.8z" fill="none" stroke="#dadada" stroke-width="1.500"/><path d="M11.500 13v4" stroke="#dadada" stroke-width="1.200"/></svg>
<span class="t" style="left:724.2px;top:44.1px;color:#d4d4d4;font-size:6.6px;letter-spacing:-.7px">A<span style="position:relative;top:.6px">Z</span></span><svg class="abs" style="left:727.2px;top:43.4px;width:2.4px;height:10px" viewBox="0 0 6 25"><path d="M3 0l3 4H0zM3 25l3-4H0z" fill="#d4d4d4"/></svg>
<div class="abs" style="left:736.2px;top:43px;width:.7px;height:12px;background:#37332e"></div>
<svg class="abs" style="left:743.2px;top:45px;width:7.8px;height:7.2px" viewBox="0 0 20 19"><path d="M8.500 0h3v7h4L10 12.500 4.500 7h4z" fill="#cfcfcf"/><path d="M1 11.500v6h18v-6" fill="none" stroke="#cfcfcf" stroke-width="2.400"/></svg>
<div class="abs" style="left:754.5px;top:44px;width:9px;height:9px;border-radius:50%;background:#dcdcdc;color:#212121;font-weight:bold;font-family:'Liberation Serif',serif;font-size:7.6px;line-height:9.2px;text-align:center">i</div>
<svg class="abs" style="left:767px;top:44.7px;width:7.6px;height:7.6px" viewBox="0 0 16 16"><path d="M1.500 0h10.500l4 4v10.500a1.500 1.500 0 0 1-1.500 1.500h-13a1.500 1.500 0 0 1-1.500-1.500v-13a1.500 1.500 0 0 1 1.500-1.500z" fill="#676767"/><rect x="3" y="2" width="8" height="4" fill="#212121"/><circle cx="8" cy="11" r="2.300" fill="#212121"/></svg>
<svg class="abs" style="left:776.8px;top:44px;width:9px;height:9px" viewBox="0 0 18 18"><circle cx="9" cy="9" r="9" fill="#676767"/><path d="M5.500 5.500l7 7M12.500 5.500l-7 7" stroke="#212121" stroke-width="1.800"/></svg>
<div class="abs" style="left:789.8px;top:59px;width:3.2px;height:20px;background:#17504f;border-radius:1px"></div>

<div class="abs" style="left:438.6px;top:60.6px;width:58.8px;height:382px;background:#191919"></div>
<div class="lex"><div style="top:0px"><b>the</b><i>=</i>53098074160</div><div style="top:7px"><b>of</b><i>=</i>30966642049</div><div style="top:14px"><b>and</b><i>=</i>22632377972</div><div style="top:20px"><b>to</b><i>=</i>19348191780</div><div style="top:27px"><b>in</b><i>=</i>16941247897</div><div style="top:34px"><b>a</b><i>=</i>15680272588</div><div style="top:40px"><b>is</b><i>=</i>8385291415</div><div style="top:47px"><b>that</b><i>=</i>8001144184</div><div style="top:54px"><b>for</b><i>=</i>6545827221</div><div style="top:60px"><b>it</b><i>=</i>5744422355</div><div style="top:67px"><b>as</b><i>=</i>5701696453</div><div style="top:74px"><b>was</b><i>=</i>5502909864</div><div style="top:80px"><b>with</b><i>=</i>5183015325</div><div style="top:87px"><b>be</b><i>=</i>4819645008</div><div style="top:94px"><b>by</b><i>=</i>4703344792</div><div style="top:101px"><b>on</b><i>=</i>4595422730</div><div style="top:107px"><b>not</b><i>=</i>4523318997</div><div style="top:114px"><b>i</b><i>=</i>4125726473</div><div style="top:121px"><b>he</b><i>=</i>4110932673</div><div style="top:127px"><b>this</b><i>=</i>3826457056</div><div style="top:134px"><b>are</b><i>=</i>3700585344</div><div style="top:141px"><b>or</b><i>=</i>3668133926</div><div style="top:147px"><b>his</b><i>=</i>3611549216</div><div style="top:154px"><b>from</b><i>=</i>3469274517</div><div style="top:161px"><b>at</b><i>=</i>3413906694</div><div style="top:167px"><b>which</b><i>=</i>3140281627</div><div style="top:174px"><b>but</b><i>=</i>2792387864</div><div style="top:181px"><b>have</b><i>=</i>2777552023</div><div style="top:187px"><b>an</b><i>=</i>2727143219</div><div style="top:194px"><b>had</b><i>=</i>2616126826</div><div style="top:201px"><b>they</b><i>=</i>2462309909</div><div style="top:207px"><b>you</b><i>=</i>2338354977</div><div style="top:214px"><b>were</b><i>=</i>2270584611</div><div style="top:221px"><b>their</b><i>=</i>2152998979</div><div style="top:227px"><b>one</b><i>=</i>2149823946</div><div style="top:234px"><b>all</b><i>=</i>2064327056</div><div style="top:241px"><b>we</b><i>=</i>2057586120</div><div style="top:247px"><b>can</b><i>=</i>1665826393</div><div style="top:254px"><b>her</b><i>=</i>1633802572</div><div style="top:261px"><b>has</b><i>=</i>1632194255</div><div style="top:267px"><b>there</b><i>=</i>1624324621</div><div style="top:274px"><b>been</b><i>=</i>1619114830</div><div style="top:281px"><b>if</b><i>=</i>1565132684</div><div style="top:287px"><b>more</b><i>=</i>1547780860</div><div style="top:294px"><b>no</b><i>=</i>1524850464</div><div style="top:301px"><b>when</b><i>=</i>1519783340</div><div style="top:307px"><b>will</b><i>=</i>1485481968</div><div style="top:314px"><b>would</b><i>=</i>1472953962</div><div style="top:321px"><b>who</b><i>=</i>1464662801</div><div style="top:327px"><b>so</b><i>=</i>1451403912</div><div style="top:334px"><b>she</b><i>=</i>1392838627</div><div style="top:341px"><b>other</b><i>=</i>1383904416</div><div style="top:347px"><b>its</b><i>=</i>1369457470</div><div style="top:354px"><b>may</b><i>=</i>1318343628</div><div style="top:361px"><b>these</b><i>=</i>1305859282</div><div style="top:368px"><b>what</b><i>=</i>1223330664</div><div style="top:374px"><b>them</b><i>=</i>1202543069</div></div>
<div class="hb" style="left:437.9px;top:59.8px;width:60.3px;height:383.7px"></div>

<!-- ===== callouts ===== -->
<!-- 1 -->
<div class="abs" style="left:110px;top:231px;width:2.3px;height:34px;background:#f7941d"></div>
<svg class="abs" style="left:107px;top:219px;width:8.2px;height:12.8px" viewBox="0 0 8 12" preserveAspectRatio="none"><path d="M4 0l4 12h-8z" fill="#f7941d"/></svg>
<div class="circ" style="left:102.9px;top:262.9px"></div>
<div class="co" style="left:27.5px;top:270.6px;width:166.6px;height:77.6px;padding-top:6.8px;padding-right:1.6px">Here, we have our other<br>Lexicon, English Words, which<br>contains the most frequently<br>used English words within our<br>documents.</div>
<div class="circ" style="left:102.9px;top:262.9px;background:none">1</div>
<!-- 2 -->
<div class="abs" style="left:317.3px;top:97.5px;width:2.3px;height:33px;background:#f7941d"></div>
<svg class="abs" style="left:314.3px;top:85.3px;width:8.2px;height:12.8px" viewBox="0 0 8 12" preserveAspectRatio="none"><path d="M4 0l4 12h-8z" fill="#f7941d"/></svg>
<div class="circ" style="left:310px;top:128.8px"></div>
<div class="co" style="left:235.4px;top:136.3px;width:165.8px;height:65.8px;padding-top:7.2px;padding-right:3.6px">Note that this Lexicon is a<br>Frequency type as opposed to<br>a Vocabulary type like the other<br>Lexicon, English Stop Words.</div>
<div class="circ" style="left:310px;top:128.8px;background:none">2</div>
<!-- 3 -->
<div class="abs" style="left:514px;top:222.5px;width:32px;height:2.3px;background:#f7941d"></div>
<svg class="abs" style="left:501.1px;top:219.4px;width:13.8px;height:8.6px" viewBox="0 0 12 8" preserveAspectRatio="none"><path d="M0 4l12-4v8z" fill="#f7941d"/></svg>
<div class="circ" style="left:544.9px;top:215.4px"></div>
<div class="co" style="left:553px;top:177.5px;width:159px;height:90.5px;padding-top:2.5px;padding-right:3px">Since this is a Frequency type<br>Lexicon, our terms are<br>denoted as key-count pairs,<br>where the yellow text is the<br>key, and the blue numbers<br>are how many times these terms<br>occurr throughout the documents.</div>
<div class="circ" style="left:544.9px;top:216.4px;background:none">3</div>

</div></body></html>
